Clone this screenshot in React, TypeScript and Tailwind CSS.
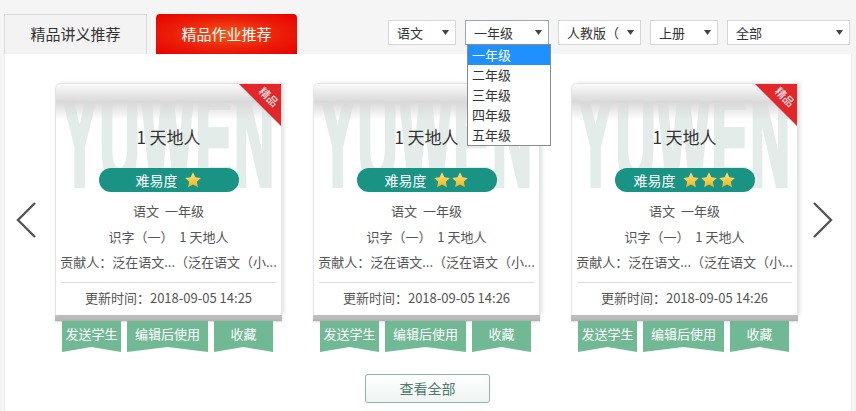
import React from 'react';

const FONT = "font-['Noto_Sans_CJK_SC','Noto_Sans',sans-serif]";

const Star: React.FC = () => (
  <svg width="18" height="18" viewBox="0 0 24 24">
    <defs>
      <linearGradient id="starg" x1="0" y1="0" x2="0" y2="1">
        <stop offset="0" stopColor="#ffe680" />
        <stop offset="1" stopColor="#f2b21c" />
      </linearGradient>
    </defs>
    <path d="M12 1.5l3.2 6.9 7.3.8-5.4 5 1.5 7.4L12 17.9l-6.6 3.7 1.5-7.4-5.4-5 7.3-.8z" fill="url(#starg)" />
  </svg>
);

const Caret: React.FC = () => (
  <svg width="7" height="5" viewBox="0 0 7 5">
    <path d="M0 0h7L3.5 5z" fill="#444" />
  </svg>
);

const Select: React.FC<{ label: string; width: string; focused?: boolean }> = ({ label, width, focused }) => (
  <div
    className={`${width} h-[25px] bg-white border ${focused ? 'border-[#9aa7b4]' : 'border-[#d6d6d6]'} flex items-center justify-between pl-[8px] pr-[6px] text-[13px] text-[#333] leading-none`}
  >
    <span>{label}</span>
    <Caret />
  </div>
);

const Chevron: React.FC<{ dir: 'left' | 'right' }> = ({ dir }) => (
  <svg width="22" height="38" viewBox="0 0 22 38">
    <path
      d={dir === 'left' ? 'M20 2L3 19l17 17' : 'M2 2l17 17L2 36'}
      fill="none"
      stroke="#555"
      strokeWidth="2.4"
    />
  </svg>
);

const cards = [
  { stars: 1, time: '2018-09-05 14:25' },
  { stars: 2, time: '2018-09-05 14:26' },
  { stars: 3, time: '2018-09-05 14:26' },
];

const Card: React.FC<{ stars: number; time: string }> = ({ stars, time }) => (
  <div className="w-[227px] flex flex-col">
    <div className="relative h-[232px] bg-white border-x border-t border-[#e4e4e4] rounded-tl-[6px] shadow-[2px_0_4px_rgba(0,0,0,0.12)] overflow-hidden">
      {/* watermark */}
      <div className="absolute left-0 right-0 top-[-12px] flex justify-center">
        <span className="font-['Liberation_Sans',sans-serif] font-bold text-[55px] leading-none tracking-[2px] text-[#e3ece8] [-webkit-text-stroke:2.5px_#e3ece8] scale-y-[2.45] origin-top">
          YUWEN
        </span>
      </div>
      {/* rolled top edge */}
      <div className="absolute top-0 left-0 right-0 h-[36px] bg-gradient-to-b from-[#fafafa] via-[#d9d9d9] to-transparent" />
      {/* ribbon */}
      <div className="absolute top-0 right-0 w-[42px] h-[42px] bg-[#e3262a] [clip-path:polygon(0_0,100%_0,100%_100%)]">
        <span className="absolute top-[7px] right-[1px] rotate-45 text-white text-[11px] leading-none">精品</span>
      </div>

      <div className="relative flex flex-col items-center pt-[41px]">
        <div className="text-[17px] leading-[24px] text-[#333]">1 天地人</div>
        <div className="mt-[19px] w-[140px] h-[24px] rounded-full bg-[#189384] flex items-center justify-center gap-[6px]">
          <span className="text-white text-[14px] leading-none">难易度</span>
          <span className="flex">
            {Array.from({ length: stars }).map((_, i) => (
              <Star key={i} />
            ))}
          </span>
        </div>
        <div className="mt-[6px] w-full flex flex-col items-center text-[13px] text-[#555] leading-[25.5px]">
          <div>语文&nbsp;&nbsp;一年级</div>
          <div>识字（一）&nbsp;&nbsp;1 天地人</div>
          <div>贡献人：泛在语文...（泛在语文（小...</div>
        </div>
        <div className="mt-[7px] w-[215px] h-px bg-[#dcdcdc]" />
        <div className="mt-[2px] text-[13px] text-[#555] leading-[25px]">更新时间：{time}</div>
      </div>
    </div>
    <div className="h-[6px] bg-gradient-to-b from-[#c8c8c8] to-[#b0b0b0] shadow-[0_1px_2px_rgba(0,0,0,0.15)]" />
    <div className="flex gap-[6px] pl-[7px]">
      {[
        ['发送学生', 'w-[59px]'],
        ['编辑后使用', 'w-[81px]'],
        ['收藏', 'w-[59px]'],
      ].map(([t, w]) => (
        <div
          key={t}
          className={`${w} h-[31px] bg-[#71b995] text-white text-[13px] flex justify-center pt-[5px] leading-[16px] [clip-path:polygon(0_0,100%_0,100%_100%,50%_84%,0_100%)]`}
        >
          {t}
        </div>
      ))}
    </div>
  </div>
);

export default function App() {
  return (
    <div className={`w-[856px] h-[411px] bg-[#f5f5f5] overflow-hidden relative ${FONT}`}>
      {/* top bar */}
      <div className="h-[54px] flex items-start px-[4px]">
        <div className="flex items-end gap-[9px] pt-[14px] h-full">
          <div className="w-[143px] h-[40px] bg-[#f3f3f3] border-x border-t border-[#dadada] flex items-center justify-center text-[15px] text-[#333]">
            精品讲义推荐
          </div>
          <div className="w-[141px] h-[40px] rounded-t-[4px] bg-[radial-gradient(ellipse_at_center,#f35a1a_0%,#ec1e08_55%,#e80000_100%)] flex items-center justify-center text-[15px] text-white">
            精品作业推荐
          </div>
        </div>
        <div className="ml-auto flex gap-[9px] pt-[20px] pr-[2px]">
          <Select label="语文" width="w-[68px]" />
          <Select label="一年级" width="w-[84px]" focused />
          <Select label="人教版（" width="w-[83px]" />
          <Select label="上册" width="w-[68px]" />
          <Select label="全部" width="w-[123px]" />
        </div>
      </div>

      {/* main panel */}
      <div className="mx-[4px] h-[357px] bg-white border-x border-[#ececec] flex flex-col items-center">
        <div className="w-full flex pt-[29px]">
          <div className="w-[50px] flex justify-center pt-[118px] pr-[8px]">
            <Chevron dir="left" />
          </div>
          <div className="flex gap-[31px]">
            {cards.map((c, i) => (
              <Card key={i} {...c} />
            ))}
          </div>
          <div className="flex-1 flex justify-center pt-[118px] pr-[4px]">
            <Chevron dir="right" />
          </div>
        </div>
        <div className="mt-[22px] w-[125px] h-[29px] rounded-[3px] border border-[#8db5a6] bg-gradient-to-b from-white to-[#eef4f1] flex items-center justify-center text-[14px] text-[#4e7c6d] ml-[-1px]">
          查看全部
        </div>
      </div>

      {/* open dropdown list */}
      <div className="absolute left-[467px] top-[44px] w-[84px] bg-white border border-[#8a8a8a] text-[13px] text-[#333]">
        {['一年级', '二年级', '三年级', '四年级', '五年级'].map((g, i) => (
          <div
            key={g}
            className={`h-[20px] leading-[20px] pl-[4px] ${i === 0 ? 'bg-[#1e90ff] text-white' : ''}`}
          >
            {g}
          </div>
        ))}
      </div>
    </div>
  );
}
